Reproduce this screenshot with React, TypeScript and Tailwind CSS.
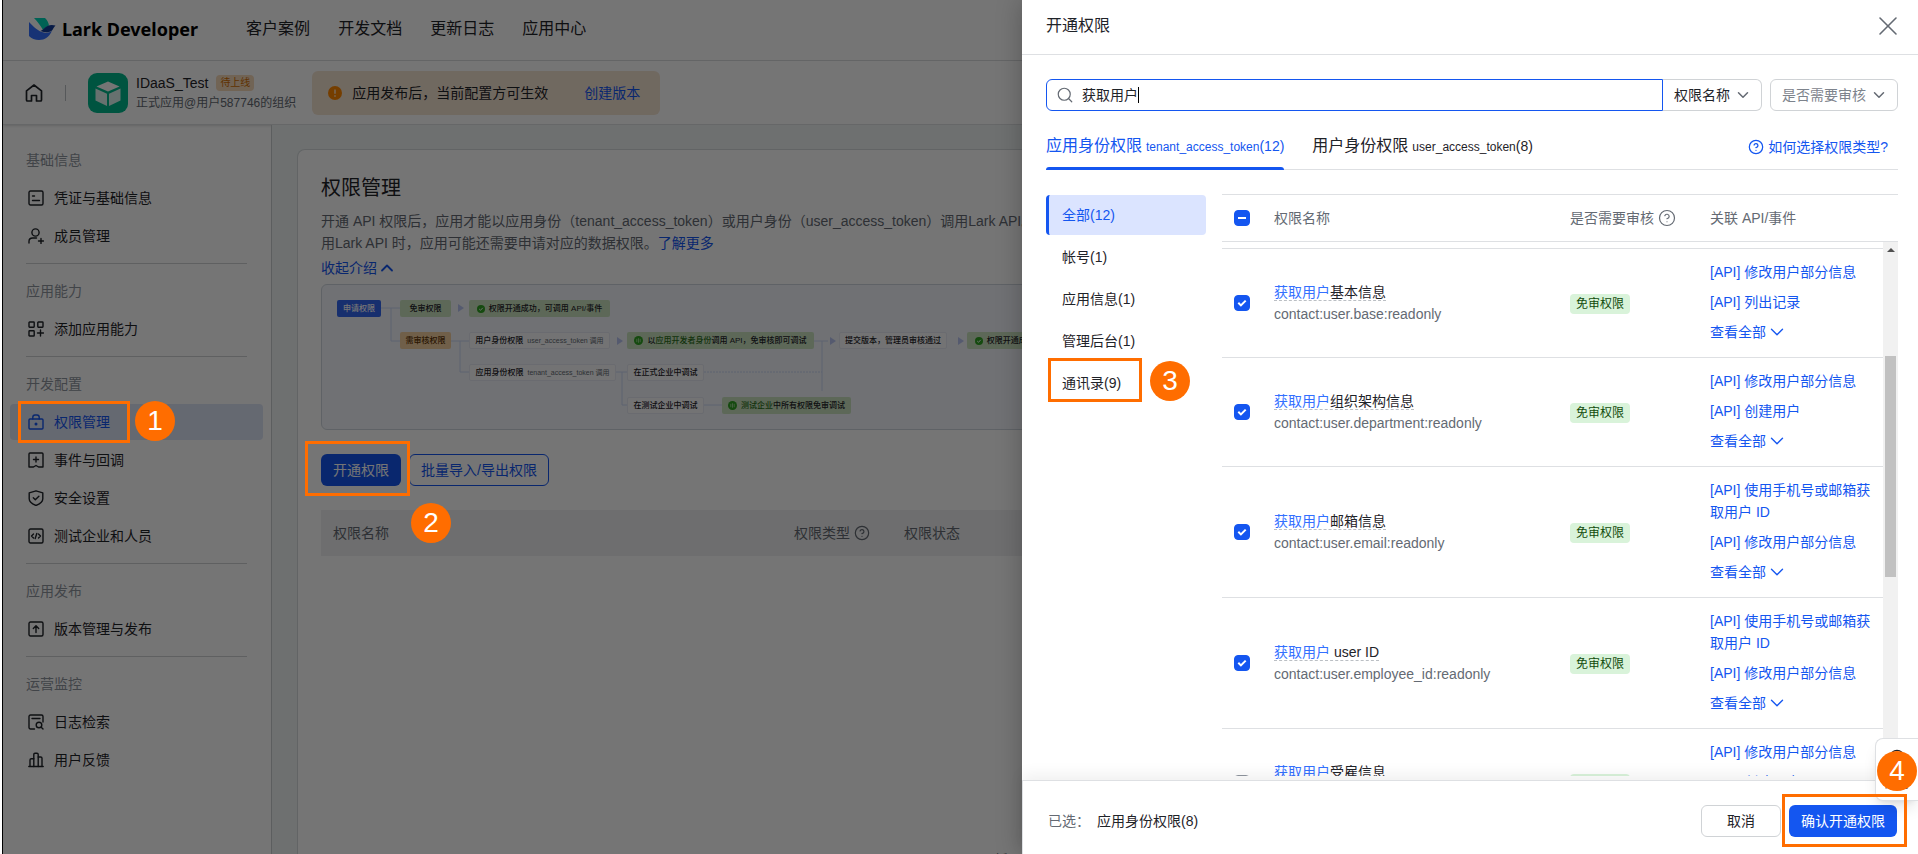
import React, { useState } from 'react';
import { ChevronDown, ChevronUp, CircleHelp, Search, X } from 'lucide-react';

type IconProps = { children: React.ReactNode };

const Icon = ({ children }: IconProps) => (
  <svg
    className="w-4 h-4 shrink-0"
    viewBox="0 0 16 16"
    fill="none"
    stroke="currentColor"
    strokeWidth="1.4"
    strokeLinejoin="round"
    strokeLinecap="round"
  >
    {children}
  </svg>
);

const icons = {
  credential: (
    <Icon>
      <rect x="1" y="1" width="14" height="14" rx="1.5" />
      <path d="M4.5 6h2M4.5 10.5h7" />
    </Icon>
  ),
  member: (
    <Icon>
      <circle cx="7.5" cy="4.5" r="3.6" />
      <path d="M8.5 10H4.5C2.5 10 1 11.5 1 13.5V15M13 10.5v5M10.5 13h5" />
    </Icon>
  ),
  ability: (
    <Icon>
      <rect x="1" y="1" width="5.2" height="5.2" rx="0.6" />
      <rect x="9.8" y="1" width="5.2" height="5.2" rx="0.6" />
      <rect x="1" y="9.8" width="5.2" height="5.2" rx="0.6" />
      <path d="M9.5 12h6M12.5 9v6" />
    </Icon>
  ),
  permission: (
    <Icon>
      <rect x="1" y="5" width="14" height="10" rx="1" />
      <path d="M4.8 5V3.2C4.8 2 5.7 1 7 1h2c1.3 0 2.2 1 2.2 2.2V5" />
      <circle cx="8" cy="10" r="0.8" fill="currentColor" />
    </Icon>
  ),
  event: (
    <Icon>
      <path d="M1 15V2c0-.6.4-1 1-1h12c.6 0 1 .4 1 1v13h-4.5L8 13.5 5.5 15z" />
      <path d="M8 5v5M5.5 7.500h5" />
    </Icon>
  ),
  security: (
    <Icon>
      <path d="M8 .8L14.8 2.8v6c0 3-3 5.3-6.8 6.7C4.2 14.1 1.2 11.8 1.2 8.8v-6z" />
      <path d="M5.3 7.800l2 2 3.600-3.600" />
    </Icon>
  ),
  test: (
    <Icon>
      <rect x="1" y="1" width="14" height="14" rx="1.5" />
      <path d="M5.5 6L3.500 8l2 2M10.500 6l2 2-2 2M8.800 5.500l-1.600 5" />
    </Icon>
  ),
  version: (
    <Icon>
      <rect x="1" y="1" width="14" height="14" rx="1.5" />
      <path d="M8 11.500V5M5.300 7.500L8 4.800l2.700 2.700" />
    </Icon>
  ),
  log: (
    <Icon>
      <path d="M6.500 15H2.500C1.700 15 1 14.300 1 13.500v-11C1 1.700 1.700 1 2.500 1h11c.8 0 1.500.7 1.500 1.500V8M4 4.500h8" />
      <circle cx="11" cy="11" r="2.8" />
      <path d="M13.200 13.200L15 15" />
    </Icon>
  ),
  feedback: (
    <Icon>
      <path d="M.8 14.500h14.400M2 14.500V8c0-.8.6-1.300 1.300-1.300h2.500M10.200 5h2.500c.8 0 1.300.5 1.300 1.300v8.200" />
      <path d="M5.800 14.500V2.500c0-.8.500-1.300 1.200-1.300h2c.7 0 1.200.5 1.200 1.300v12" />
    </Icon>
  ),
};

const menu = [
  {
    title: '基础信息',
    items: [
      { label: '凭证与基础信息', icon: icons.credential },
      { label: '成员管理', icon: icons.member },
    ],
  },
  { title: '应用能力', items: [{ label: '添加应用能力', icon: icons.ability }] },
  {
    title: '开发配置',
    items: [
      { label: '权限管理', icon: icons.permission, active: true },
      { label: '事件与回调', icon: icons.event },
      { label: '安全设置', icon: icons.security },
      { label: '测试企业和人员', icon: icons.test },
    ],
  },
  { title: '应用发布', items: [{ label: '版本管理与发布', icon: icons.version }] },
  {
    title: '运营监控',
    items: [
      { label: '日志检索', icon: icons.log },
      { label: '用户反馈', icon: icons.feedback },
    ],
  },
];

const categories = ['全部(12)', '帐号(1)', '应用信息(1)', '管理后台(1)', '通讯录(9)'];

const scopes = [
  { name: '基本信息', code: 'contact:user.base:readonly', apis: ['修改用户部分信息', '列出记录'], checked: true },
  { name: '组织架构信息', code: 'contact:user.department:readonly', apis: ['修改用户部分信息', '创建用户'], checked: true },
  { name: '邮箱信息', code: 'contact:user.email:readonly', apis: ['使用手机号或邮箱获取用户 ID', '修改用户部分信息'], checked: true },
  { name: ' user ID', code: 'contact:user.employee_id:readonly', apis: ['使用手机号或邮箱获取用户 ID', '修改用户部分信息'], checked: true },
  { name: '受雇信息', code: 'contact:user.employee:readonly', apis: ['修改用户部分信息', '创建用户'], checked: false },
];

// Numbered step marker, sits above the overlay
const Step = ({ n, className }: { n: number; className: string }) => (
  <span
    className={`absolute z-30 w-10 h-10 rounded-full bg-[#ff6d00] text-white text-[28px] leading-10 text-center ${className}`}
  >
    {n}
  </span>
);

const Frame = ({ className }: { className: string }) => (
  <span className={`absolute z-30 border-3 border-[#ff6d00] pointer-events-none ${className}`} />
);

const Logo = () => (
  <svg className="w-[27px] h-[22px]" viewBox="0 0 27 22">
    <path d="M5 0h11c2 1.800 3.500 4.500 4 7.500-2.500 1-4 2.500-6 4.500C11.500 7.500 8.500 3.500 5 0z" fill="#00d6b9" />
    <path d="M0 4c0 5 0 10 0 14 2.500 2.500 6 4 10 4 6 0 10-3 13-9-2 1.500-5 2-8 1.500C9.500 13.500 4.500 9 0 4z" fill="#3370ff" />
    <path d="M26.500 7.500c-4-1.300-8-.5-11 2.500-1.200 1.200-2.500 2.300-4 3 5 1.800 9.500 1.500 11.500-.5 1-1.300 2-3.500 3.500-5z" fill="#133c9a" />
  </svg>
);

const AppIcon = () => (
  <svg className="w-10 h-10" viewBox="0 0 40 40">
    <rect width="40" height="40" rx="9" fill="#00b88d" />
    <path d="M20 8.500l11.500 5L20 18.500l-11.500-5z" fill="#fff" />
    <path d="M7.500 15.500l11.500 5.200V33L7.500 27.500zM32.500 15.500L21 20.700V33l11.500-5.500z" fill="#fff" fillOpacity=".88" />
  </svg>
);

const Header = () => (
  <header className="h-[61px] border-b border-[#dee0e3] flex items-center pl-[26px] pb-[2px] shrink-0">
    <a href="#" className="flex items-center gap-[6px]">
      <Logo />
      <span className="font-['Noto_Sans'] font-bold text-lg text-black">Lark Developer</span>
    </a>
    <nav className="flex gap-7 ml-12 text-base">
      <a href="#">客户案例</a>
      <a href="#">开发文档</a>
      <a href="#">更新日志</a>
      <a href="#">应用中心</a>
    </nav>
  </header>
);

const AppBar = () => (
  <div className="h-16 flex items-center pl-[22px] shrink-0 border-b border-[#dee0e3] shadow-sm">
    <svg className="w-[18px] h-[18px]" viewBox="0 0 18 18" fill="none" stroke="currentColor" strokeWidth="1.7" strokeLinejoin="round">
      <path d="M1.500 6.800L9 1l7.500 5.800V16c0 .6-.4 1-1 1h-4v-5.500h-5V17h-4c-.6 0-1-.4-1-1z" />
    </svg>
    <span className="w-px h-4 bg-[#bbbfc4] ml-[22px] mr-[22px]" />
    <AppIcon />
    <div className="ml-2">
      <div className="flex items-center gap-2 h-5">
        <span className="text-sm">IDaaS_Test</span>
        <span className="px-1 rounded bg-[#f6d9ba] text-[#d06c00] text-[10px] leading-4">待上线</span>
      </div>
      <div className="text-xs leading-5 text-[#646a73]">正式应用@用户587746的组织</div>
    </div>
    <div className="ml-4 h-11 flex items-center rounded-md bg-[#f5e4d2] pl-4 pr-5 text-sm">
      <svg className="w-[14px] h-[14px] mr-[10px]" viewBox="0 0 14 14">
        <circle cx="7" cy="7" r="7" fill="#ff8800" />
        <path d="M7 3.500v4.200M7 9.300v1.400" stroke="#ffead2" strokeWidth="1.4" />
      </svg>
      应用发布后，当前配置方可生效
      <a href="#" className="ml-9 text-[#1456f0]">创建版本</a>
    </div>
  </div>
);

const Sidebar = () => (
  <aside className="w-[269px] shrink-0 border-r border-[#c9cdd0] pt-[17px] pl-[7px] pr-2 text-sm">
    {menu.map((section, i) => (
      <div key={section.title}>
        {i > 0 && <hr className="my-[9px] ml-4 mr-4 border-[#cfd1d4]" />}
        <div className="h-9 leading-9 pl-4 text-[#8f959e]">{section.title}</div>
        <ul>
          {section.items.map((item) => (
            <li key={item.label} className="relative mt-[2px]">
              <a
                href="#"
                className={`h-9 flex items-center gap-[10px] pl-[18px] rounded-sm ${
                  'active' in item ? 'bg-[#dde4f7] text-[#1456f0]' : ''
                }`}
              >
                {item.icon}
                {item.label}
              </a>
              {'active' in item && (
                <>
                  <Frame className="left-2 -top-[3px] w-[112px] h-[42px]" />
                  <Step n={1} className="left-[125px] -top-[3px]" />
                </>
              )}
            </li>
          ))}
        </ul>
      </div>
    ))}
  </aside>
);

const Ok = () => (
  <svg className="w-2 h-2 shrink-0" viewBox="0 0 8 8">
    <circle cx="4" cy="4" r="4" fill="#2ea121" />
    <path d="M2.200 4l1.300 1.300 2.300-2.500" stroke="#fff" strokeWidth=".9" fill="none" />
  </svg>
);

const Person = () => (
  <svg className="w-[9px] h-[9px] shrink-0" viewBox="0 0 8 8">
    <circle cx="4" cy="4" r="4" fill="#2ea121" />
    <path d="M2.500 2.500v3M4 2v4M5.500 2.500v3" stroke="#c4e8bb" strokeWidth=".6" fill="none" />
  </svg>
);

const node = 'absolute h-[17px] rounded-[2px] flex items-center justify-center whitespace-nowrap gap-1';
const green = 'bg-[#cbe3c1]';
const plain = 'bg-[#fafbfd] border border-[#e6eaf3]';

const FlowChart = () => (
  <div className="relative mt-1 h-[146px] rounded-md border border-[#d0d6de] bg-[#f3f7fc] text-[8px] leading-none font-medium overflow-hidden">
    <svg className="absolute left-0 top-0 w-[720px] h-[144px]" viewBox="0 0 720 144" fill="none" stroke="#ccd7f5">
      <path d="M59 23h20M69 23v33h10M129 56h18M138 56v31h9M294 87h12M300 87v33h6M382 120h18M492 56h14M500 56v50" />
      <path d="M382 87h118" strokeDasharray="2 1" />
      <path d="M136 19l6 4-6 4zM295 52l6 4-6 4zM508 52l6 4-6 4zM636 52l6 4-6 4z" fill="#b9c5f2" stroke="none" />
    </svg>
    <span className={`${node} left-[15px] top-[15px] w-[44px] bg-[#3366f0] text-white`}>申请权限</span>
    <span className={`${node} left-[78px] top-[15px] w-[51px] ${green}`}>免审权限</span>
    <span className={`${node} left-[147px] top-[15px] w-[141px] ${green}`}><Ok />权限开通成功，可调用 API/事件</span>
    <span className={`${node} left-[78px] top-[47px] w-[51px] bg-[#f5cfa0] text-[#5c3303]`}>需审核权限</span>
    <span className={`${node} left-[147px] top-[47px] w-[141px] ${plain}`}>
      用户身份权限<span className="text-[#646a73] text-[7px] font-normal">user_access_token 调用</span>
    </span>
    <span className={`${node} left-[305px] top-[47px] w-[187px] ${green}`}>
      <Person />
      <span>以<span className="text-[#2b6e20]">应用开发者身份</span>调用 API，免审核即可调试</span>
    </span>
    <span className={`${node} left-[517px] top-[47px] w-[108px] ${plain}`}>提交版本，管理员审核通过</span>
    <span className={`${node} left-[645px] top-[47px] w-[141px] ${green}`}><Ok />权限开通成功，可调用 API/事件</span>
    <span className={`${node} left-[147px] top-[79px] w-[147px] ${plain}`}>
      应用身份权限<span className="text-[#646a73] text-[7px] font-normal">tenant_access_token 调用</span>
    </span>
    <span className={`${node} left-[305px] top-[79px] w-[77px] ${plain}`}>在正式企业中调试</span>
    <span className={`${node} left-[305px] top-[112px] w-[77px] ${plain}`}>在测试企业中调试</span>
    <span className={`${node} left-[400px] top-[112px] w-[129px] ${green}`}>
      <Person />
      <span><span className="text-[#2b6e20]">测试企业</span>中所有权限免审调试</span>
    </span>
  </div>
);

const MainContent = () => (
  <main className="flex-1 min-w-0 bg-[#f0f5f4] pt-6 pl-[25px] pr-6">
    <div className="h-full rounded-t-lg border border-b-0 border-[#d5dadc] bg-white px-[23px] pt-6 text-sm">
      <h1 className="text-xl leading-7">权限管理</h1>
      <p className="mt-2 leading-[22px] text-[#646a73]">
        开通 API 权限后，应用才能以应用身份（tenant_access_token）或用户身份（user_access_token）调用Lark API。调
        <br />
        用Lark API 时，应用可能还需要申请对应的数据权限。<a href="#" className="text-[#1456f0]">了解更多</a>
      </p>
      <button className="h-6 mt-[2px] flex items-center text-[#1456f0]">
        收起介绍 <ChevronUp size={20} strokeWidth={2.2} />
      </button>
      <FlowChart />
      <div className="relative mt-6 flex gap-2">
        <button className="h-8 px-3 rounded-md bg-[#1456f0] text-white">开通权限</button>
        <button className="h-8 px-[11px] rounded-md border border-[#1456f0] text-[#1456f0]">批量导入/导出权限</button>
        <Frame className="-left-4 -top-[13px] w-[105px] h-[55px]" />
        <Step n={2} className="left-[90px] top-[49px]" />
      </div>
      <table className="w-full mt-6 table-fixed text-left text-[#646a73]">
        <thead>
          <tr className="h-[46px] bg-[#eff0f1]">
            <th className="w-[461px] pl-3 font-normal">权限名称</th>
            <th className="w-[110px] pl-3 font-normal">
              <span className="flex items-center gap-1">权限类型 <CircleHelp size={16} strokeWidth={1.8} /></span>
            </th>
            <th className="pl-3 font-normal">权限状态</th>
          </tr>
        </thead>
        <tbody>
          <tr>
            <td colSpan={3} className="pt-[294px] pl-[673px]">暂无权限</td>
          </tr>
        </tbody>
      </table>
    </div>
  </main>
);

const Check = ({ checked, label, mixed }: { checked: boolean; label: string; mixed?: boolean }) => (
  <span className="relative block w-4 h-4">
    <input
      type="checkbox"
      defaultChecked={checked}
      aria-label={label}
      className="peer block w-4 h-4 appearance-none rounded-[4px] border border-[#8f959e] checked:border-[#1456f0] checked:bg-[#1456f0]"
    />
    {checked && (
      <svg className="absolute inset-0 w-4 h-4 pointer-events-none" viewBox="0 0 16 16" fill="none" stroke="#fff" strokeWidth="2">
        {mixed ? <path d="M4 8h8" /> : <path d="M4.300 7.800l2.600 2.600 4.800-4.800" />}
      </svg>
    )}
  </span>
);

const cols = (
  <colgroup>
    <col className="w-10" />
    <col />
    <col className="w-[140px]" />
    <col className="w-[173px]" />
  </colgroup>
);

const ScopeTable = () => (
  <div className="flex-1 min-w-0 flex flex-col border-t border-[#dee0e3]">
    <div className="pr-[15px] border-b border-[#dee0e3] shrink-0">
      <table className="w-full table-fixed text-left text-[#646a73]">
        {cols}
        <thead>
          <tr className="h-[46px]">
            <th className="pl-3"><Check checked mixed label="全选" /></th>
            <th className="pl-3 font-normal">权限名称</th>
            <th className="font-normal">
              <span className="flex items-center gap-1">是否需要审核 <CircleHelp size={18} strokeWidth={1.6} /></span>
            </th>
            <th className="font-normal">关联 API/事件</th>
          </tr>
        </thead>
      </table>
    </div>
    <div className="flex-1 min-h-0 flex">
      <div className="flex-1 min-w-0 overflow-hidden pt-[6px]">
        <table className="w-full table-fixed text-left">
          {cols}
          <tbody>
            {scopes.map((s) => (
              <tr key={s.code} className="border-t border-[#dee0e3]">
                <td className="pl-3"><Check checked={s.checked} label={`获取用户${s.name}`} /></td>
                <td className="pl-3 leading-[22px]">
                  <div>
                    <span className="border-b border-dashed border-[#bbbfc4] whitespace-pre">
                      <span className="text-[#3370ff]">获取用户</span>{s.name}
                    </span>
                  </div>
                  <div className="text-[#646a73]">{s.code}</div>
                </td>
                <td>
                  <span className="inline-block h-5 px-[6px] rounded bg-[#d9f3da] text-xs leading-5 text-[#124b0c]">免审权限</span>
                </td>
                <td className="pt-3 pb-[14px] pr-2 leading-[22px] text-[#1456f0]">
                  {s.apis.map((api) => (
                    <a key={api} href="#" className="block mb-2">[API] {api}</a>
                  ))}
                  <button className="flex items-center h-[22px]">
                    查看全部 <ChevronDown size={22} strokeWidth={1.5} />
                  </button>
                </td>
              </tr>
            ))}
          </tbody>
        </table>
      </div>
      <div className="w-[15px] bg-[#f1f1f1] shrink-0 flex flex-col items-center">
        <svg className="w-2 h-4" viewBox="0 0 8 16">
          <path d="M0 10l4-4 4 4z" fill="#505050" />
        </svg>
        <div className="mt-[98px] w-[11px] h-[221px] bg-[#c1c1c1]" />
      </div>
    </div>
  </div>
);

const Drawer = () => {
  const [category, setCategory] = useState(categories[0]);

  return (
    <section
      role="dialog"
      aria-label="开通权限"
      className="absolute z-20 right-0 top-0 bottom-0 w-[896px] bg-white flex flex-col text-sm shadow-[0_0_24px_rgba(0,0,0,0.25)]"
    >
      <div className="h-[55px] pb-[3px] border-b border-[#dee0e3] flex items-center justify-between pl-6 pr-[14px] shrink-0">
        <h2 className="text-base">开通权限</h2>
        <button aria-label="关闭" className="text-[#646a73]">
          <X size={32} strokeWidth={1.2} />
        </button>
      </div>

      <div className="flex-1 min-h-0 flex flex-col pl-6 pr-5 pt-6">
        <div className="flex h-8 shrink-0">
          <label className="flex-1 flex items-center rounded-l-md border border-[#1456f0] pl-[9px]">
            <Search size={18} strokeWidth={1.6} className="text-[#646a73] mr-2" />
            <input
              type="text"
              defaultValue="获取用户"
              aria-label="搜索权限"
              className="field-sizing-content outline-none"
            />
            <span className="w-px h-4 bg-black" />
          </label>
          <span className="relative">
            <select
              aria-label="搜索类型"
              className="h-8 w-[99px] appearance-none rounded-r-md border border-l-0 border-[#d0d3d6] pl-[11px] outline-none"
            >
              <option>权限名称</option>
            </select>
            <ChevronDown size={18} strokeWidth={2} className="absolute right-[10px] top-[7px] text-[#646a73] pointer-events-none" />
          </span>
          <span className="relative ml-2">
            <select
              aria-label="是否需要审核"
              className="h-8 w-[128px] appearance-none rounded-md border border-[#d0d3d6] pl-[11px] text-[#7d838c] outline-none"
            >
              <option>是否需要审核</option>
            </select>
            <ChevronDown size={18} strokeWidth={2} className="absolute right-[10px] top-[7px] text-[#646a73] pointer-events-none" />
          </span>
        </div>

        <div className="mt-[10px] h-[49px] border-b border-[#dee0e3] flex items-center shrink-0" role="tablist">
          <button role="tab" aria-selected="true" className="relative h-12 text-base text-[#1456f0] flex items-baseline pt-[13px] mr-7">
            应用身份权限<span className="ml-1 text-xs">tenant_access_token</span><span className="text-sm">(12)</span>
            <span className="absolute left-0 right-0 -bottom-[1px] h-[3px] rounded-t-sm bg-[#1456f0]" />
          </button>
          <button role="tab" aria-selected="false" className="h-12 text-base flex items-baseline pt-[13px]">
            用户身份权限<span className="ml-1 text-xs">user_access_token</span><span className="text-sm">(8)</span>
          </button>
          <a href="#" className="ml-auto mr-[10px] pt-[3px] flex items-center gap-1 text-[#1456f0]">
            <CircleHelp size={16} strokeWidth={1.9} />如何选择权限类型?
          </a>
        </div>

        <div className="flex-1 min-h-0 flex gap-4 pt-6 pb-1">
          <ul className="w-40 shrink-0 pt-[1px]">
            {categories.map((c, i) => (
              <li key={c} className="relative mb-[2px]">
                <button
                  onClick={() => setCategory(c)}
                  className={`w-full h-10 text-left rounded pl-[13px] border-l-3 ${
                    c === category ? 'border-[#1456f0] bg-[#dbe4ff] text-[#1456f0]' : 'border-transparent'
                  }`}
                >
                  {c}
                </button>
                {i === 4 && (
                  <>
                    <Frame className="left-[2px] -top-[5px] w-[94px] h-11" />
                    <Step n={3} className="left-[104px] -top-[2px]" />
                  </>
                )}
              </li>
            ))}
          </ul>
          <ScopeTable />
        </div>
      </div>

      <div className="relative h-[74px] border-t border-l border-[#dee0e3] flex items-center pl-[25px] pr-[21px] pb-[2px] pt-2 shrink-0 shadow-[0_-6px_14px_rgba(0,0,0,0.06)]">
        <span className="text-[#646a73]">已选：</span>
        <span className="ml-[7px]">应用身份权限(8)</span>
        <button className="ml-auto h-8 w-20 rounded-md border border-[#d0d3d6]">取消</button>
        <button className="ml-2 h-8 px-3 rounded-md bg-[#1456f0] text-white">确认开通权限</button>
        <button
          aria-label="帮助"
          className="absolute right-0 -top-[43px] w-[43px] h-[63px] rounded-l-lg border border-r-0 border-[#dee0e3] bg-white shadow-lg text-xs flex flex-col items-center justify-between pt-[10px] pb-2"
        >
          <CircleHelp size={16} />
          应用
        </button>
        <Frame className="right-[11px] top-[13px] w-[125px] h-[53px]" />
        <Step n={4} className="right-[1px] -top-[30px]" />
      </div>
    </section>
  );
};

const App = () => (
  <div className="h-screen overflow-hidden bg-white pl-[2px] font-['Liberation_Sans','Noto_Sans_CJK_SC',sans-serif] text-[#1f2329]">
    <div className="relative h-full border-l border-black flex flex-col overflow-hidden">
      <Header />
      <AppBar />
      <div className="flex-1 min-h-0 flex">
        <Sidebar />
        <MainContent />
      </div>
      <div className="absolute inset-0 z-10 bg-black/54" />
      <Drawer />
    </div>
  </div>
);

export default App;
